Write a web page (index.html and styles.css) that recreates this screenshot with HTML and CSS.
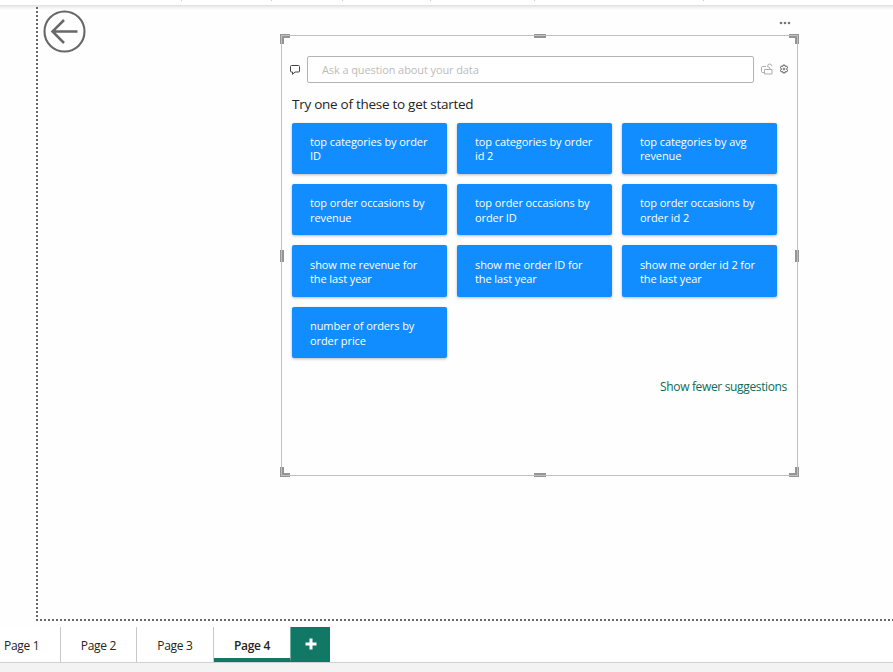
FILE: index.html
```
<!DOCTYPE html>
<html lang="en">
<head>
<meta charset="utf-8">
<title>Report</title>
<link rel="stylesheet" href="styles.css">
</head>
<body>
<div class="ribbon"></div>
<main class="workspace">
  <section class="canvas">
    <svg class="back" width="44" height="44" viewBox="0 0 44 44" fill="none" stroke="#686868"><circle cx="21.500" cy="21.500" r="20" stroke-width="2.100"/><path d="M34.500 21.500H9.500M21 10L9.500 21.500 21 33" stroke-width="2.500"/></svg>
    <div class="visual">
      <svg class="more" width="12" height="4" viewBox="0 0 12 4" fill="#777"><circle cx="2" cy="2" r="1.300"/><circle cx="6" cy="2" r="1.300"/><circle cx="10" cy="2" r="1.300"/></svg>
      <i class="corner tl"></i><i class="corner tr"></i><i class="corner bl"></i><i class="corner br"></i>
      <i class="grip t"></i><i class="grip b"></i><i class="grip l"></i><i class="grip r"></i>
      <div class="ask">
        <svg class="chat" width="12" height="11" viewBox="0 0 12 11" fill="none" stroke="#444" stroke-width="1"><path d="M2.500 1.500h7q1 0 1 1v4.500q0 1-1 1H6L3.500 10.300V8h-1q-1 0-1-1V2.500q0-1 1-1z"/></svg>
        <div class="field">Ask a question about your data</div>
        <svg class="lock" width="12" height="12" viewBox="0 0 12 12" fill="none" stroke="#adadad" stroke-width="1"><path d="M3 9.500H1.500q-1 0-1-1v-4q0-1 1-1H5M3.500 6.500h7.500v4.500H3.500zM9 6.500V5L6.500 3.500q0-2.500 2-2.500t2.500 2.200"/></svg>
        <svg class="gear" width="10" height="10" viewBox="0 0 10 10" fill="none" stroke="#444"><path d="M4.200 1h1.600l.4 1.300 1.400-.3.900 1.500L7.600 5l.9 1.500L7.600 8l-1.400-.3L5.800 9H4.200l-.4-1.300L2.400 8l-.9-1.500L2.400 5l-.9-1.500L2.400 2l1.400.3z" stroke-width=".9"/><circle cx="5" cy="5" r="1" stroke-width=".7"/></svg>
      </div>
      <h1>Try one of these to get started</h1>
      <div class="tiles">
        <div class="tile">top categories by order<br>ID</div>
        <div class="tile">top categories by order<br>id 2</div>
        <div class="tile">top categories by avg<br>revenue</div>
        <div class="tile">top order occasions by<br>revenue</div>
        <div class="tile">top order occasions by<br>order ID</div>
        <div class="tile">top order occasions by<br>order id 2</div>
        <div class="tile">show me revenue for<br>the last year</div>
        <div class="tile">show me order ID for<br>the last year</div>
        <div class="tile">show me order id 2 for<br>the last year</div>
        <div class="tile">number of orders by<br>order price</div>
      </div>
      <a class="fewer">Show fewer suggestions</a>
    </div>
  </section>
</main>
<nav class="tabs">
  <div class="tab first">Page 1</div>
  <div class="tab">Page 2</div>
  <div class="tab third">Page 3</div>
  <div class="tab active">Page 4</div>
  <div class="add"><svg width="12" height="12" viewBox="0 0 12 12"><path d="M6 .5v11M.5 6h11" stroke="#fff" stroke-width="3"/></svg></div>
</nav>
</body>
</html>
```
FILE: styles.css
```
* { box-sizing: border-box; }
body {
  margin: 0;
  width: 893px;
  height: 672px;
  overflow: hidden;
  display: flex;
  flex-direction: column;
  background: #f3f3f3;
  font-family: "Open Sans", "Noto Sans", sans-serif;
  color: #252423;
}
.ribbon {
  height: 5px;
  background:
    linear-gradient(#ccc, #ccc) 181px 0 / 1px 1px no-repeat,
    linear-gradient(#ccc, #ccc) 271px 0 / 1px 1px no-repeat,
    linear-gradient(#ccc, #ccc) 342px 0 / 1px 1px no-repeat,
    linear-gradient(#ccc, #ccc) 430px 0 / 1px 1px no-repeat,
    linear-gradient(#ccc, #ccc) 534px 0 / 1px 1px no-repeat,
    linear-gradient(#ccc, #ccc) 703px 0 / 1px 1px no-repeat,
    #fff;
}
.workspace {
  position: relative;
  z-index: 0;
  height: 622px;
  padding: 2px 0 0 36px;
  background: linear-gradient(#dcdcdc, #f0f0f0 2px, #fefefe 5px);
}
.canvas {
  position: relative;
  height: 614px;
  padding: 28px 0 0 245px;
  background:
    repeating-linear-gradient(#686868 0 2px, transparent 2px 4px) 0 0 / 2px 100% no-repeat,
    repeating-linear-gradient(90deg, #686868 0 2px, transparent 2px 4px) 0 100% / 100% 2px no-repeat;
}
.back { position: absolute; left: 7px; top: 3px; }
.visual {
  position: relative;
  width: 517px;
  height: 441px;
  padding: 20px 0 0 7px;
  border: 1px solid #c0c0c0;
}
.more { position: absolute; right: 6px; top: -15px; }
.corner, .grip { position: absolute; z-index: -1; }
.corner { width: 10px; height: 10px; border: 0 solid #949494; }
.tl { left: -2px; top: -2px; border-width: 4px 0 0 4px; }
.tr { right: -2px; top: -2px; border-width: 4px 4px 0 0; }
.bl { left: -2px; bottom: -2px; border-width: 0 0 4px 4px; }
.br { right: -2px; bottom: -2px; border-width: 0 4px 4px 0; }
.grip { background: #949494; }
.t, .b { width: 12px; height: 4px; left: 252px; }
.t { top: -2px; }
.b { bottom: -2px; }
.l, .r { width: 4px; height: 12px; top: 214px; }
.l { left: -2px; }
.r { right: -2px; }
.ask { display: flex; align-items: center; height: 27px; }
.field {
  width: 447px;
  height: 27px;
  margin-left: 6px;
  padding-left: 14px;
  border: 1px solid #b3b3b3;
  border-radius: 2px;
  background: #fff;
  color: #bdbbb9;
  font-size: 11px;
  line-height: 26px;
  letter-spacing: -0.1px;
}
.lock { margin: -2px 0 0 7px; }
.gear { margin: -2px 0 0 6px; }
h1 {
  margin: 11px 0 0 3px;
  height: 20px;
  font-size: 13.500px;
  line-height: 20px;
  font-weight: 400;
  letter-spacing: -0.270px;
}
.tiles {
  margin: 8.700px 0 0 3px;
  display: grid;
  grid-template-columns: repeat(3, 154.700px);
  grid-auto-rows: 51.300px;
  gap: 10.100px 10.300px;
}
.tile {
  padding: 12.200px 0 0 18px;
  border-radius: 2px;
  background: #118dff;
  box-shadow: 0 1px 3px rgba(0, 0, 0, .28);
  color: #fff;
  font-size: 11px;
  line-height: 14.500px;
  letter-spacing: -0.090px;
  white-space: nowrap;
}
.fewer {
  display: block;
  margin: 19px 10px 0 0;
  text-align: right;
  font-size: 12px;
  line-height: 20px;
  letter-spacing: -0.350px;
  color: #0f6b58;
}
.tabs {
  display: flex;
  height: 36px;
  border-bottom: 1px solid #d0d0d0;
  background: #fff;
}
.tab {
  width: 76px;
  border-right: 1px solid #c8c8c8;
  text-align: center;
  font-size: 12px;
  line-height: 38px;
  letter-spacing: -0.300px;
}
.first { width: 61px; padding-left: 4px; text-align: left; }
.third { width: 77px; }
.active {
  width: 77px;
  border-bottom: 4px solid #117865;
  border-right-color: #70aca0;
  font-weight: 600;
}
.add {
  width: 39px;
  height: 35px;
  padding-top: 11px;
  text-align: center;
  line-height: 12px;
  background: #117865;
}
.add svg { display: block; margin: 0 auto; }
```
